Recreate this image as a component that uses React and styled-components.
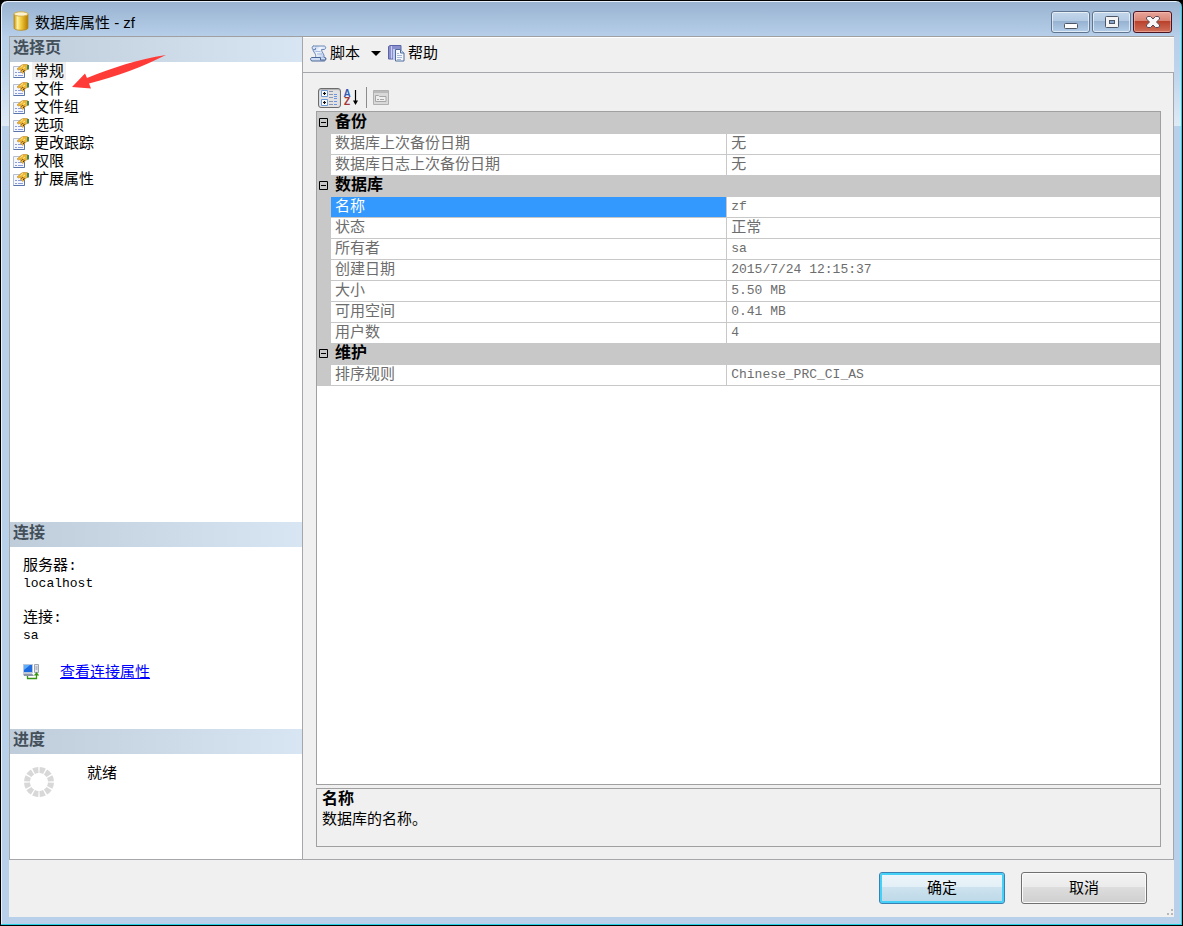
import React, { useState } from "react";
import styled, { createGlobalStyle, css } from "styled-components";

const pages = ["常规", "文件", "文件组", "选项", "更改跟踪", "权限", "扩展属性"];

const groups = [
  {
    title: "备份",
    rows: [
      { name: "数据库上次备份日期", value: "无" },
      { name: "数据库日志上次备份日期", value: "无" },
    ],
  },
  {
    title: "数据库",
    rows: [
      { name: "名称", value: "zf" },
      { name: "状态", value: "正常" },
      { name: "所有者", value: "sa" },
      { name: "创建日期", value: "2015/7/24 12:15:37" },
      { name: "大小", value: "5.50 MB" },
      { name: "可用空间", value: "0.41 MB" },
      { name: "用户数", value: "4" },
    ],
  },
  {
    title: "维护",
    rows: [{ name: "排序规则", value: "Chinese_PRC_CI_AS" }],
  },
];

const isLatin = (text) => /^[\x20-\x7e]+$/.test(text);

const DatabaseIcon = () => (
  <svg width="16" height="20" viewBox="0 0 16 20" aria-hidden="true">
    <defs>
      <linearGradient id="gold" x1="0" x2="1">
        <stop offset="0" stopColor="#c8920c" />
        <stop offset="0.25" stopColor="#fdf0a0" />
        <stop offset="0.5" stopColor="#f3cb3c" />
        <stop offset="1" stopColor="#b27a00" />
      </linearGradient>
    </defs>
    <path
      d="M1 3v14c0 3 14 3 14 0V3z"
      fill="url(#gold)"
      stroke="#b88a20"
      strokeWidth="0.8"
    />
    <ellipse cx="8" cy="3" rx="7" ry="2.2" fill="#fbf3cf" stroke="#d2ae4a" />
  </svg>
);

const PageIcon = () => (
  <svg width="16" height="15" viewBox="0 0 16 15" aria-hidden="true">
    <path d="M0.5 2.5h11v11h-11z" fill="#f4f7fd" stroke="#b4bfd6" />
    <path d="M0.5 13.5h11v-6" fill="none" stroke="#5a74ac" />
    <path d="M2 8.5h2M5 8.5h4M2 11.5h2M5 11.5h5" stroke="#8c9cda" />
    <path
      d="M4 5L8 1.500 10 .5h4l1 .5v4l-2.500 1.500L10 9.500 7.500 7.500 8 5 5.500 6z"
      fill="#efb431"
      stroke="#b98725"
      strokeWidth="0.6"
    />
    <path d="M7.500 3.500L10 1.500M10 4.500l2-1.500" stroke="#ffef9e" />
    <path d="M8.500 6.500l1-1M10 8l1.500-1.500M10 5.500l1 1" stroke="#4a3510" />
    <path d="M14 1h2v4.500h-2z" fill="#3f8a58" />
  </svg>
);

const ScriptIcon = () => (
  <svg width="17" height="17" viewBox="0 0 17 17" aria-hidden="true">
    <defs>
      <linearGradient id="paper" x1="0" x2="1" y2="0.6">
        <stop offset="0" stopColor="#a9bfe3" />
        <stop offset="0.5" stopColor="#f2f7fe" />
        <stop offset="1" stopColor="#b9cdec" />
      </linearGradient>
    </defs>
    <path
      d="M3 1h11c2.500 0 2 3.500 0 3.500h-2.500C11.500 7.500 15 9 14 13H5C7.500 9 2.500 7 3 4z"
      fill="url(#paper)"
      stroke="#6d86b6"
    />
    <path
      d="M4 1C1.500 1 1.500 4.500 4 4.500h1.500V3"
      fill="#dce7f7"
      stroke="#6d86b6"
    />
    <path
      d="M1.500 12.500h9V15h4c2-.5 1.500-3 0-2.500M1.500 12.500c-1.500.5-1 3.500.5 3.500h12c2 0 2.500-3 .5-3.500"
      fill="#cfddf3"
      stroke="#4d6698"
    />
    <path d="M5.500 6.500h5M7 9h5" stroke="#a3b8dc" />
  </svg>
);

const HelpIcon = () => (
  <svg width="17" height="17" viewBox="0 0 17 17" aria-hidden="true">
    <path d="M0.500 1.500L2 .5h11v13.500H.5z" fill="#8990cd" stroke="#5a64a6" />
    <path d="M3.500 1v12.500" stroke="#c9cdf0" />
    <path d="M5 4h5v11H5z" fill="#c3cbee" />
    <path
      d="M7.500 4.500h5l3.500 3.500v8H7.500z"
      fill="#f5f9fe"
      stroke="#4d6c9c"
    />
    <path d="M12.500 4.500V8H16" fill="#cfdcf0" stroke="#4d6c9c" />
    <path d="M9 8.500h2M9 10.500h5M9 12.500h5M9 14.500h4" stroke="#a5b8d6" />
  </svg>
);

const CategorizedIcon = () => (
  <svg width="19" height="16" viewBox="0 0 19 16" aria-hidden="true">
    <path d="M1.500 .5h6v6h-6zM1.500 9.500h6v6h-6z" fill="#fff" stroke="#6f9ad8" />
    <path
      d="M4.500 2v3M3 3.500h3M4.500 11v3M3 12.500h3"
      stroke="#111"
      strokeWidth="1.200"
    />
    <path
      d="M9 1.500h4M9 4.500h4M9 7.500h4M9 11.500h4M9 14.500h4"
      stroke="#8a97b4"
    />
    <path
      d="M14 4.500h3M14 6.500h3M14 8.500h3M14 11.500h3M14 14.500h3"
      stroke="#6b96e4"
    />
  </svg>
);

const SortIcon = () => (
  <svg width="16" height="17" viewBox="0 0 16 17" aria-hidden="true">
    <SortLetter x="4" y="8" fill="#2f5bb5">
      A
    </SortLetter>
    <SortLetter x="4" y="16" fill="#a33434">
      Z
    </SortLetter>
    <path d="M12.500 1v13" stroke="#000" strokeWidth="1.200" />
    <path d="M10 11.500h5L12.500 16z" />
  </svg>
);

const PropertyPagesIcon = () => (
  <svg width="16" height="15" viewBox="0 0 16 15" aria-hidden="true">
    <path d="M.5 .5h15v14H.5z" fill="#d9d9d9" stroke="#b0b0b0" />
    <path d="M1 2h14" stroke="#bababa" strokeWidth="2" />
    <path d="M2.500 5.500h3l1 1h6.500v5h-10.500z" fill="#efefef" stroke="#a6a6a6" />
    <path d="M4 9.500h2M7 9.500h4" stroke="#a6a6a6" />
  </svg>
);

const ConnectionIcon = () => (
  <svg width="16" height="16" viewBox="0 0 16 16" aria-hidden="true">
    <path d="M.5 .5h9v8h-9z" fill="#1d6be0" stroke="#b9c6dc" />
    <path d="M1 1h6L1 6z" fill="#63aef8" />
    <path d="M0 9.500h9l2 2.500H1z" fill="#8a93a8" />
    <path d="M11.500 .5h4v8h-4z" fill="#e2e5ea" stroke="#a0a7b3" />
    <path d="M12.500 3h2M12.500 5h2" stroke="#8e96a6" />
    <path d="M4.500 12v2.500h9V10" fill="none" stroke="#36960f" strokeWidth="1.300" />
    <path d="M10.800 11.500L13.500 8l2.700 3.500z" fill="#36960f" />
  </svg>
);

const Spinner = () => (
  <svg width="30" height="30" viewBox="0 0 30 30" aria-hidden="true">
    <circle
      cx="15"
      cy="15"
      r="12"
      fill="none"
      stroke="#d8d8d8"
      strokeWidth="6"
      pathLength="120"
      strokeDasharray="8 2"
      strokeDashoffset="-1"
    />
  </svg>
);

const App = () => {
  const [selected, setSelected] = useState("名称");
  const [closed, setClosed] = useState([]);

  const toggle = (title) =>
    setClosed(
      closed.includes(title)
        ? closed.filter((item) => item !== title)
        : [...closed, title]
    );

  return (
    <>
      <GlobalStyle />
      <Window>
        <TitleBar>
          <DatabaseIcon />
          <h1>数据库属性 - zf</h1>
          <CaptionButton aria-label="最小化">
            <svg width="14" height="16" viewBox="0 0 14 16">
              <rect x=".5" y="9.500" width="13" height="5" rx="1" fill="#fff" stroke="#4d5666" />
            </svg>
          </CaptionButton>
          <CaptionButton aria-label="最大化">
            <svg width="14" height="12" viewBox="0 0 14 12">
              <rect x=".5" y=".5" width="13" height="11" rx="1" fill="#f4f4f4" stroke="#4d5666" />
              <rect x="4.500" y="4.500" width="5" height="3" fill="#87a5cb" stroke="#4d5666" />
            </svg>
          </CaptionButton>
          <CaptionButton $close aria-label="关闭">
            <svg width="14" height="12" viewBox="0 0 14 12">
              <path
                d="M1.500 .5h3L7 3 9.500 .5h3l1 1.500v1L10.500 6l3 3v1l-1 1.500h-3L7 9l-2.500 2.500h-3L.5 10V9l3-3-3-3V2z"
                fill="#f7f7f7"
                stroke="#5b4a55"
              />
            </svg>
          </CaptionButton>
        </TitleBar>

        <Body>
          <Sidebar>
            <SectionTitle>选择页</SectionTitle>
            <PageList>
              {pages.map((page, index) => (
                <PageButton key={page} $current={index === 0}>
                  <PageIcon />
                  <span>{page}</span>
                </PageButton>
              ))}
              <Pointer width="96" height="36" viewBox="0 0 96 36" aria-hidden="true">
                <path
                  d="M0 32L13 18.500l2 4.500C40 13 66 4 94 0 72 11 44 22 17 28.500l2 5z"
                  fill="#ff3b38"
                />
              </Pointer>
            </PageList>

            <SectionTitle>连接</SectionTitle>
            <Connection>
              <dl>
                <dt>服务器:</dt>
                <dd>localhost</dd>
                <dt>连接:</dt>
                <dd>sa</dd>
              </dl>
              <LinkRow>
                <ConnectionIcon />
                <a href="#connection">查看连接属性</a>
              </LinkRow>
            </Connection>

            <SectionTitle>进度</SectionTitle>
            <Progress>
              <Spinner />
              <span>就绪</span>
            </Progress>
          </Sidebar>

          <Main>
            <Toolbar>
              <ToolButton>
                <ScriptIcon />
                脚本
              </ToolButton>
              <DropButton aria-label="脚本选项">
                <svg width="10" height="5" viewBox="0 0 10 5">
                  <path d="M0 0h10L5 5z" />
                </svg>
              </DropButton>
              <ToolButton>
                <HelpIcon />
                帮助
              </ToolButton>
            </Toolbar>

            <Content>
              <GridTools>
                <GridTool $pressed aria-label="按分类顺序">
                  <CategorizedIcon />
                </GridTool>
                <GridTool aria-label="字母顺序">
                  <SortIcon />
                </GridTool>
                <Divider />
                <GridTool disabled aria-label="属性页">
                  <PropertyPagesIcon />
                </GridTool>
              </GridTools>

              <GridBox>
                <Grid>
                  <colgroup>
                    <col className="gutter" />
                    <col className="name" />
                    <col />
                  </colgroup>
                  {groups.map(({ title, rows }) => (
                    <tbody key={title}>
                      <GroupRow>
                        <td>
                          <Expander
                            aria-label={title}
                            aria-expanded={!closed.includes(title)}
                            onClick={() => toggle(title)}
                          >
                            <svg width="9" height="9" viewBox="0 0 9 9">
                              <path d="M.5 .5h8v8h-8zM2 4.500h5" fill="none" stroke="#000" />
                            </svg>
                          </Expander>
                        </td>
                        <th colSpan="2">{title}</th>
                      </GroupRow>
                      {!closed.includes(title) &&
                        rows.map(({ name, value }) => (
                          <PropertyRow
                            key={name}
                            $selected={selected === name}
                            onClick={() => setSelected(name)}
                          >
                            <td />
                            <th scope="row">{name}</th>
                            <Value $latin={isLatin(value)}>{value}</Value>
                          </PropertyRow>
                        ))}
                    </tbody>
                  ))}
                </Grid>
              </GridBox>

              <Description>
                <h2>名称</h2>
                <p>数据库的名称。</p>
              </Description>
            </Content>
          </Main>
        </Body>

        <Footer>
          <DialogButton $primary>确定</DialogButton>
          <DialogButton>取消</DialogButton>
          <Grip width="8" height="8" viewBox="0 0 8 8" aria-hidden="true">
            <path d="M5 0h2v2H5zM5 4h2v2H5zM1 4h2v2H1z" fill="#b8b8b8" />
          </Grip>
        </Footer>
      </Window>
    </>
  );
};

export default App;

const GlobalStyle = createGlobalStyle`
  * {
    box-sizing: border-box;
  }

  body {
    margin: 0;
    background: #000;
    color: #000;
    font-family: "Liberation Sans", "Noto Sans CJK SC", sans-serif;
    font-size: 15px;
    line-height: 18px;
  }

  button {
    margin: 0;
    padding: 0;
    border: none;
    background: none;
    color: inherit;
    font: inherit;
  }

  svg {
    display: block;
    flex: none;
  }

  h1, h2, p, dl, dd {
    margin: 0;
  }
`;

const Window = styled.div`
  display: flex;
  flex-direction: column;
  min-height: 100vh;
  padding: 0 8px;
  border: 1px solid #000;
  border-radius: 7px 7px 0 0;
  box-shadow: inset -1px -1px 0 #25cfe4, inset 1px 1px 0 #e8f1fb;
  background: linear-gradient(
    #98b2d0 0,
    #b7cfe9 36px,
    #bdd4ec 70px,
    #dfeaf6 125px,
    #b9d0ea 125px
  );
  padding-bottom: 8px;
`;

const TitleBar = styled.header`
  display: flex;
  align-items: flex-start;
  gap: 2px;
  height: 35px;
  padding: 10px 2px 0 4px;

  h1 {
    flex: 1;
    padding-left: 4px;
    font-size: 15px;
    font-weight: 400;
    line-height: 24px;
  }
`;

const CaptionButton = styled.button`
  display: flex;
  align-items: center;
  justify-content: center;
  width: 39px;
  height: 22px;
  border: 1px solid #5f7590;
  border-radius: 3px;
  box-shadow: inset 0 0 0 1px rgba(255, 255, 255, 0.6);
  background: linear-gradient(#c3d6ea 0, #b3cae3 45%, #96b2d1 45%, #b3cde8 100%);

  ${({ $close }) =>
    $close &&
    css`
      border-color: #4a1420;
      box-shadow: inset 0 0 0 1px rgba(255, 200, 190, 0.5);
      background: linear-gradient(#e7a69a 0, #d98373 45%, #b8402a 45%, #d0705a 100%);
    `}
`;

const Body = styled.div`
  display: flex;
  flex: 1;
  border-top: 1px solid #a0a0a0;
  border-bottom: 1px solid #a5a7ab;
  border-left: 1px solid #a5a7ab;
  background: #f0f0f0;
`;

const Sidebar = styled.aside`
  display: flex;
  flex-direction: column;
  flex: none;
  width: 293px;
  border-right: 1px solid #a5a7ab;
  background: #fff;
`;

const SectionTitle = styled.h2`
  height: 25px;
  padding-left: 3px;
  background: linear-gradient(90deg, #bfccda, #d8e5f3);
  color: #434f59;
  font-size: 16px;
  font-weight: 700;
  line-height: 21px;
`;

const PageList = styled.nav`
  position: relative;
  display: flex;
  flex: 1;
  flex-direction: column;
  align-items: flex-start;
`;

const PageButton = styled.button`
  display: flex;
  align-items: center;
  gap: 3px;
  height: 18px;
  padding-left: 3px;

  span {
    padding: 0 2px;
    background: ${({ $current }) => ($current ? "#f0f0f0" : "none")};
  }
`;

const Pointer = styled.svg`
  position: absolute;
  top: -7px;
  left: 62px;
  pointer-events: none;
`;

const Connection = styled.section`
  padding: 11px 13px 47px;

  dl {
    line-height: 17px;
  }

  dt {
    font-family: "Liberation Mono", "Noto Sans CJK SC", monospace;
  }

  dd {
    margin-bottom: 18px;
    font-family: "Liberation Mono", monospace;
    font-size: 13px;
  }
`;

const LinkRow = styled.div`
  display: flex;
  align-items: center;
  gap: 21px;
  height: 20px;

  a {
    color: #00f;
  }
`;

const Progress = styled.section`
  display: flex;
  align-items: flex-start;
  gap: 33px;
  padding: 13px 14px 62px;

  span {
    line-height: 12px;
  }
`;

const Main = styled.main`
  display: flex;
  flex: 1;
  flex-direction: column;
  min-width: 0;
`;

const Toolbar = styled.div`
  display: flex;
  align-items: center;
  height: 35px;
  padding: 0 7px 4px;
  border-top: 1px solid #fff;
`;

const ToolButton = styled.button`
  display: flex;
  align-items: center;
  gap: 3px;
`;

const DropButton = styled.button`
  padding: 0 7px 0 11px;
`;

const Content = styled.div`
  display: flex;
  flex: 1;
  flex-direction: column;
  padding: 14px 12px 12px 13px;
  border-top: 1px solid #a5a7ab;
  border-right: 1px solid #a5a7ab;
`;

const GridTools = styled.div`
  display: flex;
  align-items: center;
  height: 24px;
  padding: 0 2px 3px;
`;

const GridTool = styled.button`
  display: flex;
  align-items: center;
  justify-content: center;
  height: 20px;
  padding: 0 2px;

  ${({ $pressed }) =>
    $pressed &&
    css`
      padding: 0 1px;
      border: 1px solid #6c6c6c;
      border-radius: 3px;
      background: #e2e2e2;
      box-shadow: inset 0 1px 1px #b0b0b0;
    `}
`;

const SortLetter = styled.text`
  font-family: "Liberation Sans", sans-serif;
  font-size: 10px;
  font-weight: 700;
  text-anchor: middle;
`;

const Divider = styled.div`
  width: 1px;
  height: 21px;
  margin: 0 4px 0 5px;
  background: #8c8c8c;
`;

const GridBox = styled.div`
  flex: 1;
  padding-top: 1px;
  border: 1px solid #a0a0a0;
  background: linear-gradient(#c8c8c8 1px, #fff 1px);
`;

const Grid = styled.table`
  width: 100%;
  border-collapse: collapse;
  table-layout: fixed;

  .gutter {
    width: 14px;
  }

  .name {
    width: 47%;
  }

  td,
  th {
    height: 21px;
    padding: 0 4px;
    line-height: 18px;
    text-align: left;
    vertical-align: top;
    white-space: nowrap;
  }

  td:first-child {
    padding: 0;
    background: #c8c8c8;
  }
`;

const GroupRow = styled.tr`
  background: #c8c8c8;

  th {
    font-size: 16px;
    font-weight: 700;
  }
`;

const PropertyRow = styled.tr`
  color: #6d6d6d;

  th {
    background: ${({ $selected }) => ($selected ? "#3399ff" : "#fff")};
    box-shadow: inset 0 -1px 0 #c8c8c8, inset -1px 0 0 #c8c8c8;
    color: ${({ $selected }) => ($selected ? "#fff" : "inherit")};
    font-weight: 400;
  }
`;

const Value = styled.td`
  box-shadow: inset 0 -1px 0 #c8c8c8;

  ${({ $latin }) =>
    $latin &&
    css`
      && {
        font-family: "Liberation Mono", monospace;
        font-size: 13px;
        line-height: 20px;
      }
    `}
`;

const Expander = styled.button`
  display: block;
  padding: 5px 2px;
`;

const Description = styled.section`
  height: 59px;
  margin-top: 3px;
  padding: 0 5px;
  border: 1px solid #a0a0a0;
  line-height: 20px;

  h2 {
    font-size: 16px;
  }
`;

const Footer = styled.footer`
  position: relative;
  display: flex;
  justify-content: flex-end;
  gap: 16px;
  padding: 12px 27px 13px;
  background: #f0f0f0;
`;

const DialogButton = styled.button`
  width: 126px;
  height: 32px;
  border: 1px solid #707070;
  border-radius: 3px;
  box-shadow: inset 0 0 0 1px #fbfbfb;
  background: linear-gradient(#f2f2f2 0, #ebebeb 48%, #dddddd 48%, #cfcfcf 100%);

  ${({ $primary }) =>
    $primary &&
    css`
      border-color: #3c7fb1;
      box-shadow: inset 0 0 0 2px #45d0f7;
      background: linear-gradient(#edf5fa 0, #e2eff6 48%, #cde2ee 48%, #bcd8e8 100%);
    `}
`;

const Grip = styled.svg`
  position: absolute;
  right: 0;
  bottom: 0;
`;
